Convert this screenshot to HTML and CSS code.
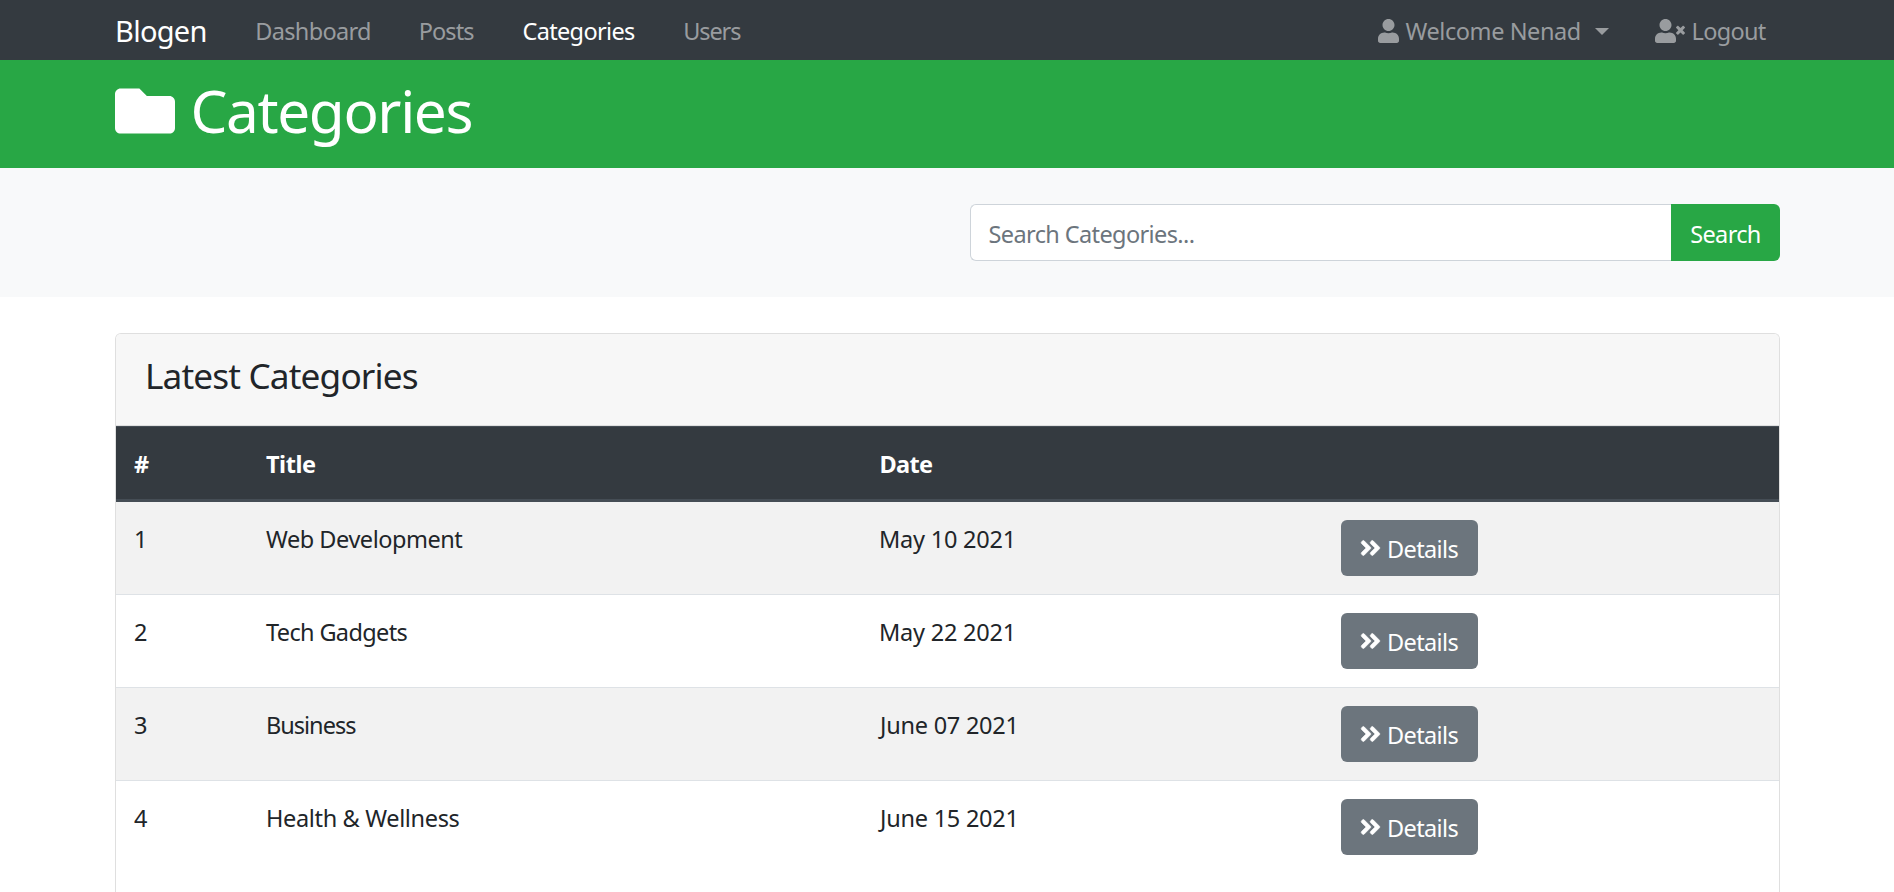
FILE: index.html
```
<!DOCTYPE html>
<html lang="en">
<head>
<meta charset="utf-8">
<title>Blogen</title>
<link rel="stylesheet" href="styles.css">
</head>
<body>
<svg class="sprite" aria-hidden="true">
  <symbol id="user" viewBox="0 0 448 512"><path d="M224 256c70.7 0 128-57.3 128-128S294.7 0 224 0 96 57.3 96 128s57.3 128 128 128zm89.6 32h-16.7c-22.2 10.2-46.9 16-72.9 16s-50.6-5.8-72.9-16h-16.7C60.2 288 0 348.2 0 422.4V464c0 26.5 21.5 48 48 48h352c26.5 0 48-21.5 48-48v-41.6c0-74.2-60.2-134.4-134.4-134.4z"/></symbol>
  <symbol id="user-times" viewBox="0 0 640 512"><path d="M224 256c70.7 0 128-57.3 128-128S294.7 0 224 0 96 57.3 96 128s57.3 128 128 128zm89.6 32h-16.7c-22.2 10.2-46.9 16-72.9 16s-50.6-5.8-72.9-16h-16.7C60.2 288 0 348.2 0 422.4V464c0 26.5 21.5 48 48 48h352c26.5 0 48-21.5 48-48v-41.6c0-74.2-60.2-134.4-134.4-134.4z"/><path d="M589.6 240l45.6-45.6c6.3-6.3 6.3-16.5 0-22.8l-22.8-22.8c-6.3-6.3-16.5-6.3-22.8 0L544 194.4l-45.6-45.6c-6.3-6.3-16.5-6.3-22.8 0l-22.8 22.8c-6.3 6.3-6.3 16.5 0 22.8l45.6 45.6-45.6 45.6c-6.3 6.3-6.3 16.5 0 22.8l22.8 22.8c6.3 6.3 16.5 6.3 22.8 0l45.6-45.6 45.6 45.6c6.3 6.3 16.5 6.3 22.8 0l22.8-22.8c6.3-6.3 6.3-16.5 0-22.8L589.6 240z"/></symbol>
  <symbol id="folder" viewBox="0 0 512 512"><path d="M464 128H272l-64-64H48C21.5 64 0 85.5 0 112v288c0 26.5 21.5 48 48 48h416c26.5 0 48-21.5 48-48V176c0-26.5-21.5-48-48-48z"/></symbol>
  <symbol id="angles" viewBox="0 0 448 512"><path d="M224.3 273l-136 136c-9.4 9.4-24.6 9.4-33.9 0l-22.6-22.6c-9.4-9.4-9.4-24.6 0-33.9l96.4-96.4-96.4-96.4c-9.4-9.4-9.4-24.6 0-33.9L54.3 103c9.4-9.4 24.6-9.4 33.9 0l136 136c9.5 9.4 9.5 24.6.1 34zm192-34l-136-136c-9.4-9.4-24.6-9.4-33.9 0l-22.6 22.6c-9.4 9.4-9.4 24.6 0 33.9l96.4 96.4-96.4 96.4c-9.4 9.4-9.4 24.6 0 33.9l22.6 22.6c9.4 9.4 24.6 9.4 33.9 0l136-136c9.4-9.2 9.4-24.4 0-33.8z"/></symbol>
</svg>

<nav class="navbar">
  <div class="container nav-row">
    <a class="brand">Blogen</a>
    <a class="link dashboard">Dashboard</a>
    <a class="link posts">Posts</a>
    <a class="link categories active">Categories</a>
    <a class="link users">Users</a>
    <a class="link welcome"><svg class="icon"><use href="#user"/></svg><span>Welcome Nenad</span><i class="caret"></i></a>
    <a class="link logout"><svg class="icon wide"><use href="#user-times"/></svg><span>Logout</span></a>
  </div>
</nav>

<header class="header">
  <div class="container header-row">
    <svg class="folder"><use href="#folder"/></svg>
    <h1>Categories</h1>
  </div>
</header>

<section class="search">
  <div class="container search-row">
    <input type="text" placeholder="Search Categories...">
    <button class="search-btn">Search</button>
  </div>
</section>

<main class="container">
  <div class="card">
    <div class="card-header"><h4>Latest Categories</h4></div>
    <div class="row head"><b>#</b><b class="h-title">Title</b><b class="h-date">Date</b></div>
    <div class="row first striped"><span>1</span><span class="t-web">Web Development</span><span class="may">May 10 2021</span><a class="btn"><svg class="icon"><use href="#angles"/></svg><span>Details</span></a></div>
    <div class="row"><span>2</span><span class="t-tech">Tech Gadgets</span><span class="may">May 22 2021</span><a class="btn"><svg class="icon"><use href="#angles"/></svg><span>Details</span></a></div>
    <div class="row striped"><span>3</span><span class="t-business">Business</span><span class="june">June 07 2021</span><a class="btn"><svg class="icon"><use href="#angles"/></svg><span>Details</span></a></div>
    <div class="row"><span>4</span><span class="t-health">Health &amp; Wellness</span><span class="june">June 15 2021</span><a class="btn"><svg class="icon"><use href="#angles"/></svg><span>Details</span></a></div>
  </div>
</main>
</body>
</html>
```
FILE: styles.css
```
* { box-sizing: border-box; }

html, body { height: 100%; }

body {
  margin: 0;
  overflow: hidden;
  background: #fff;
  color: #212529;
  font: 23.5px/36px "Noto Sans", "Open Sans", sans-serif;
}

h1, h4 { margin: 0; font-weight: 400; }

.sprite { display: none; }

.container { width: 1665px; margin: 0 114px 0 115px; }

.icon { width: 21px; height: 24px; fill: currentColor; flex: none; }
.icon.wide { width: 30px; }

/* Navbar */
.navbar { height: 60px; background: #343a40; }
.nav-row { display: flex; align-items: center; height: 60px; }
.brand { width: 140.2px; padding-top: 2px; color: #fff; font-size: 29px; letter-spacing: -.72px; }
.link { padding-top: 2px; color: #999c9f; white-space: nowrap; }
.link.active { color: #fff; }
.dashboard { width: 163.5px; letter-spacing: -.66px; }
.posts { width: 103.8px; letter-spacing: -.9px; }
.categories { width: 160.7px; letter-spacing: -.66px; }
.users { letter-spacing: -1.1px; }
.welcome, .logout { display: flex; align-items: center; }
.welcome { width: 277px; margin-left: auto; letter-spacing: -.42px; }
.welcome span { margin-left: 7px; }
.logout { width: 125.5px; letter-spacing: -.67px; }
.logout span { margin-left: 7px; }
.caret { margin-left: 14px; border: 7px solid transparent; border-top-color: currentColor; border-bottom: 0; }

/* Page header */
.header { height: 108px; background: #28a745; color: #fff; }
.header-row { display: flex; align-items: flex-start; }
.folder { width: 60px; height: 60px; margin: 20.5px 0 0 -.5px; fill: currentColor; }
.header h1 { margin: 14px 0 0 16px; font-size: 58.5px; line-height: 72px; letter-spacing: -1.4px; }

/* Search */
.search { height: 129px; padding-top: 36px; background: #f8f9fa; }
.search-row { display: flex; justify-content: flex-end; }
.search input {
  width: 701px; height: 57px; padding: 2px 18px 0 17.5px;
  border: 1px solid #ced4da; border-right: 0; border-radius: 6px 0 0 6px;
  background: #fff; font: inherit; letter-spacing: -.61px;
}
.search input::placeholder { color: #6c757d; opacity: 1; }
.search-btn {
  width: 109px; height: 57px; padding: 2px 0 0; border: 0; border-radius: 0 6px 6px 0;
  background: #28a745; color: #fff; font: inherit; letter-spacing: -.66px;
}

/* Categories card */
.card { height: 559px; margin-top: 36px; border: 1px solid #dfdfdf; border-bottom: 0; border-radius: 6px 6px 0 0; overflow: hidden; }
.card-header { height: 92px; padding: 19px 29px; border-bottom: 1px solid #dfdfdf; background: #f7f7f7; }
.card-header h4 { font-size: 35.2px; line-height: 44px; letter-spacing: -.85px; }
.row {
  display: grid; grid-template-columns: 132px 613px 462px 1fr; align-items: start;
  height: 93px; padding: 18px 0 0 18px; border-top: 1px solid #dee2e6;
}
.row > span, .row > b { padding-top: 1px; letter-spacing: -.3px; }
.row.first { height: 92px; border-top: 0; }
.row.striped { background: #f2f2f2; }
.row.head { height: 76px; border-top: 1px solid #454d55; border-bottom: 3px solid #454d55; background: #343a40; color: #fff; }
.row .h-title { letter-spacing: -.45px; }
.row .h-date { letter-spacing: -.63px; padding-left: .5px; }
.row .t-web { letter-spacing: -.46px; }
.row .t-tech { letter-spacing: -.64px; }
.row .t-business { letter-spacing: -1px; }
.row .t-health { letter-spacing: -.35px; }
.row .may { letter-spacing: -.22px; }
.row .june { padding-left: 1px; letter-spacing: -.24px; }
.btn {
  display: flex; align-items: center; width: 137px; height: 56px; padding-left: 18.5px;
  border-radius: 6px; background: #6c757d; color: #fff; letter-spacing: -.62px;
}
.btn .icon { stroke: currentColor; stroke-width: 12px; }
.btn span { padding-top: 2px; margin-left: 6.5px; }
```
